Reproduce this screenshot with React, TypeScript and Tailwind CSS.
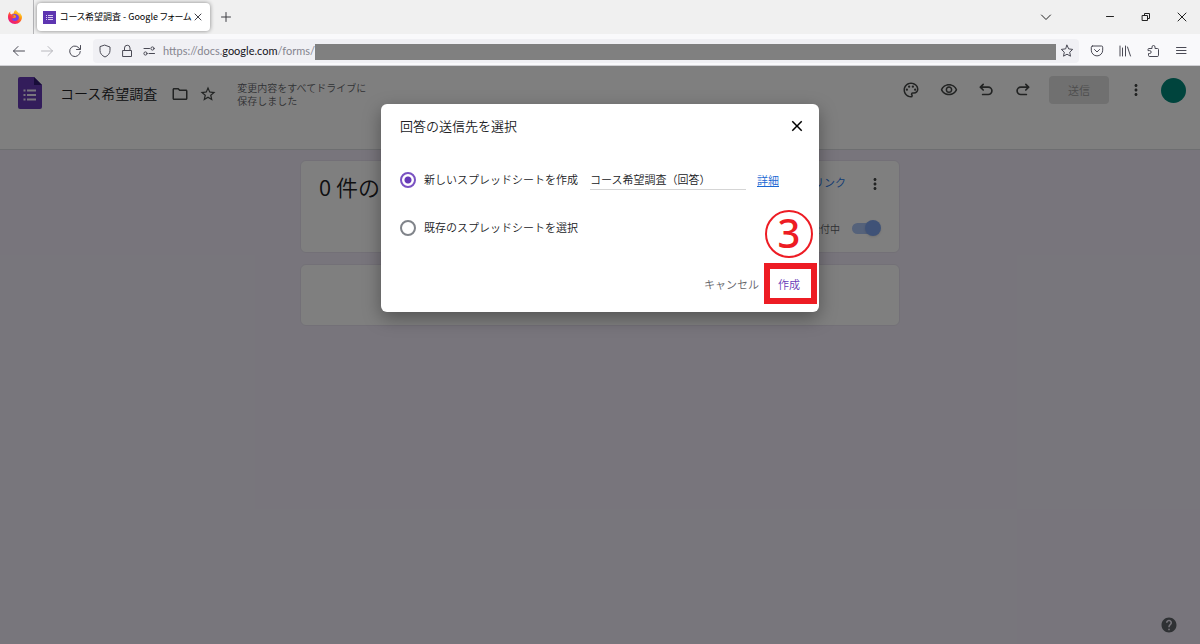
import type { ReactNode } from 'react';
import { MdClose, MdHelp, MdMoreVert, MdOutlineFolder, MdOutlinePalette, MdOutlineVisibility, MdStarBorder } from 'react-icons/md';

function Stroke({ children, className = 'size-4', width = 1 }: { children: ReactNode; className?: string; width?: number }) {
    return (
        <svg viewBox="0 0 16 16" className={`shrink-0 ${className}`} fill="none" stroke="currentColor" strokeWidth={width} strokeLinecap="round" strokeLinejoin="round" aria-hidden="true">
            {children}
        </svg>
    );
}

function FirefoxLogo() {
    return (
        <svg viewBox="0 0 32 32" className="size-[14px]" aria-hidden="true">
            <defs>
                <linearGradient id="flame" x1="0.85" y1="0.05" x2="0.2" y2="0.95">
                    <stop offset="0" stopColor="#fff44f" />
                    <stop offset="0.35" stopColor="#ff980e" />
                    <stop offset="0.65" stopColor="#ff3647" />
                    <stop offset="1" stopColor="#e31587" />
                </linearGradient>
            </defs>
            <path d="M30 11c-1-3-3-5-5-6 1 2 2 4 2 5C24 5 20 4 18 0c-4 2-5 6-5 8-2 0-4 1-5 2L5 8c0-2 0-3 1-5-5 3-6 9-6 13 0 9 7 16 16 16s16-7 16-16c0-2-1-4-2-5z" fill="url(#flame)" />
            <path d="M16 9c5 0 9 3 9 8s-4 8-9 8-8-3-8-7c2 2 4 2 6 1 2-1 3-1 4-2-1-2-3-2-5-2-2-1-4-3-2-5 2-1 4-1 5-1z" fill="#7542e5" />
            <path d="M13 11c2 0 4 1 5 3 1 1 0 3-2 3-2 1-4 1-6 0 2 0 3-1 4-2-2 0-3-2-1-4z" fill="#ff980e" />
        </svg>
    );
}

function TabStrip() {
    return (
        <div className="flex h-[34px] items-center bg-[#f0f0f0] text-[#3c3c43]">
            <div className="flex h-full w-[34px] items-center border-r border-[#b5b5b8] pl-2">
                <FirefoxLogo />
            </div>
            <div className="ml-[3px] flex h-7 w-[173px] items-center rounded-sm bg-white px-1.5 shadow-[0_0_4px_rgba(0,0,0,0.45)]">
                <svg viewBox="0 0 13 13" className="size-[13px] shrink-0" aria-hidden="true">
                    <path fill="#5e35b1" d="M0 0h13v13H0z" />
                    <path fill="#d9cdf0" d="M3 4h1v1H3zM5 4h5v1H5zM3 6h1v1H3zM5 6h5v1H5zM3 8h1v1H3zM5 8h5v1H5z" />
                </svg>
                <span className="ml-1 flex-1 whitespace-nowrap text-[9px] font-normal text-black [font-feature-settings:'palt']">コース希望調査 - Google フォーム</span>
                <button aria-label="タブを閉じる">
                    <Stroke className="size-3" width={1.3}><path d="M4 4l8 8M12 4l-8 8" /></Stroke>
                </button>
            </div>
            <button className="ml-2" aria-label="新しいタブ">
                <Stroke><path d="M8 3.5v9M3.5 8h9" /></Stroke>
            </button>
            <div className="ml-auto flex items-center pr-2.5 text-[#222]">
                <button className="mr-12" aria-label="タブを一覧表示">
                    <Stroke><path d="M3.5 6L8 10.5 12.5 6" /></Stroke>
                </button>
                <button className="mr-5" aria-label="最小化">
                    <Stroke><path d="M4.5 7.5h7" /></Stroke>
                </button>
                <button className="mr-5" aria-label="元のサイズに戻す">
                    <Stroke><path d="M4.5 6.5h5v5h-5zM6.5 6.5v-2h5v5h-2" /></Stroke>
                </button>
                <button aria-label="閉じる">
                    <Stroke><path d="M4 4l8 8M12 4l-8 8" /></Stroke>
                </button>
            </div>
        </div>
    );
}

function AddressBar() {
    return (
        <div className="flex h-8 items-center border-b border-[#d0d0d4] bg-[#f9f9fb] pr-[11px] pt-0.5 text-[#4a4a55]">
            <div className="flex w-[93px] items-center gap-3 pl-[11px]">
                <button aria-label="戻る">
                    <Stroke><path d="M13.5 8h-11M7 3.5L2.5 8 7 12.5" /></Stroke>
                </button>
                <button className="text-[#b8b8bd]" aria-label="進む" disabled>
                    <Stroke><path d="M2.5 8h11M9 3.5L13.5 8 9 12.5" /></Stroke>
                </button>
                <button aria-label="再読み込み">
                    <Stroke><path d="M13 6.5A5.3 5.3 0 1 0 13.3 8.5M13.5 2.5v4h-4" /></Stroke>
                </button>
            </div>
            <div className="flex h-6 min-w-0 flex-1 items-center rounded bg-[#f0f0f4] px-1">
                <Stroke><path d="M8 2.2l5 1.8v3.5c0 3-2 5.2-5 6.5-3-1.3-5-3.5-5-6.5V4z" /></Stroke>
                <Stroke className="ml-1.5 size-4"><path d="M4 7.5h8.500v6H4zM5.5 7.5V5a2.750 2.750 0 0 1 5.5 0v2.5" /></Stroke>
                <Stroke className="ml-1.5 size-4"><path d="M3 5.5h5.5M8 10.5h5.5" /><circle cx="11.5" cy="5.5" r="1.6" /><circle cx="4.5" cy="10.5" r="1.6" /></Stroke>
                <span className="ml-1.5 pt-0.5 font-['Lato'] text-[11px] font-normal text-[#85858f]">
                    https://docs.<span className="text-[#15141a]">google.com</span>/forms/
                </span>
                <span className="mt-0.5 h-4 flex-1 bg-[#808080]" />
                <button className="ml-[3px]" aria-label="ブックマークに追加">
                    <Stroke><path d="M8 2.2l1.7 3.7 4 .5-3 2.8.8 4L8 11.2l-3.5 2 .8-4-3-2.8 4-.5z" /></Stroke>
                </button>
            </div>
            <div className="ml-[10px] flex gap-3">
                <button aria-label="Pocket">
                    <Stroke><path d="M3.5 3h9A1.2 1.2 0 0 1 13.7 4.2v3a5.7 5.7 0 0 1-11.4 0v-3A1.2 1.2 0 0 1 3.5 3zM5.5 6.5L8 9l2.5-2.5" /></Stroke>
                </button>
                <button aria-label="ライブラリー">
                    <Stroke><path d="M3 3v10M5.5 5v8M8.5 3v10M10.5 4l3 9" /></Stroke>
                </button>
                <button aria-label="拡張機能">
                    <Stroke><path d="M4.5 13.5a1 1 0 0 1-1-1v-2h1.2a1.4 1.4 0 0 0 0-2.9H3V6.5a1 1 0 0 1 1-1h3V4a1.5 1.5 0 0 1 3 0v1.5h2.5a1 1 0 0 1 1 1v6a1 1 0 0 1-1 1z" /></Stroke>
                </button>
                <button aria-label="メニュー">
                    <Stroke><path d="M3.5 4.5h9.5M3.5 7.5h9.5M3.5 10.5h9.5" /></Stroke>
                </button>
            </div>
        </div>
    );
}

function FormsHeader() {
    return (
        <header className="flex h-[84px] items-start border-b border-[#dadce0] bg-white pl-[18px] pr-3.5 text-[#444746]">
            <svg viewBox="0 0 24 32" className="mt-[11px] h-8 w-6" aria-hidden="true">
                <path fill="#673ab7" d="M2 0h14l8 8v22a2 2 0 0 1-2 2H2a2 2 0 0 1-2-2V2a2 2 0 0 1 2-2z" />
                <path fill="#311b72" d="M16 0l8 8h-8z" />
                <path fill="#f1ebfa" d="M5.5 12.5h2v2h-2zM9 12.5h9v2H9zM5.5 17h2v2h-2zM9 17h9v2H9zM5.5 21.5h2v2h-2zM9 21.5h9v2H9z" />
            </svg>
            <h1 className="ml-[18px] mt-4 text-[14px] leading-[22px] text-[#202124]">コース希望調査</h1>
            <button className="ml-3.5 mt-[19px]" aria-label="フォルダに移動">
                <MdOutlineFolder className="size-[18px]" />
            </button>
            <button className="ml-2.5 mt-[19px]" aria-label="スターを付ける">
                <MdStarBorder className="size-[18px]" />
            </button>
            <p className="ml-5 mt-[15px] text-[10px] leading-[13px] text-[#5f6368]">
                変更内容をすべてドライブに
                <br />
                保存しました
            </p>
            <div className="ml-auto mt-2.5 flex h-7 items-center">
                <button aria-label="テーマをカスタマイズ"><MdOutlinePalette className="size-[18px]" /></button>
                <button className="ml-5" aria-label="プレビュー"><MdOutlineVisibility className="size-[18px]" /></button>
                <button className="ml-[19px]" aria-label="元に戻す">
                    <Stroke className="size-[18px]" width={1.5}><path d="M5.5 3L3 5.5 5.5 8M3 5.5h7a2.9 2.9 0 0 1 0 6.500H5" /></Stroke>
                </button>
                <button className="ml-[19px]" aria-label="やり直す">
                    <Stroke className="size-[18px]" width={1.5}><path d="M10.5 3L13 5.5 10.5 8M13 5.5H6A2.9 2.9 0 0 0 6 12h5" /></Stroke>
                </button>
                <button className="ml-[17px] h-7 w-[60px] rounded-sm bg-[#e0e0e0] text-[11px] text-[#9a9a9a]">送信</button>
                <button className="ml-[18px]" aria-label="その他"><MdMoreVert className="size-[18px]" /></button>
                <button className="ml-4 size-[25px] rounded-full bg-[#00897b]" aria-label="アカウント" />
            </div>
        </header>
    );
}

function Responses() {
    return (
        <main className="mx-auto mt-2.5 flex w-1/2 flex-col gap-[11px]">
            <section className="h-[93px] rounded-md border border-[#e6e1ee] bg-white pl-[18px] pr-[15px]">
                <div className="flex items-start pt-[7px]">
                    <h2 className="text-[22px] leading-9 text-[#202124]">0 件の</h2>
                    <a href="#sheets" className="ml-auto mt-1.5 text-[11px] leading-4 text-[#1a73e8]">リンク</a>
                    <button className="ml-5 mt-[7px] text-[#444746]" aria-label="その他のオプション"><MdMoreVert className="size-[18px]" /></button>
                </div>
                <label className="mt-4 flex items-center justify-end pr-[3px] text-[10px] text-[#5f6368]">
                    受付中
                    <span className="relative ml-3 flex h-4 w-[29px] items-center">
                        <input type="checkbox" defaultChecked className="absolute inset-0 appearance-none" />
                        <span className="h-[11px] w-7 rounded-full bg-[#aac4f5]" />
                        <span className="absolute right-0 size-4 rounded-full bg-[#7fa5ee] shadow" />
                    </span>
                </label>
            </section>
            <section className="h-[62px] rounded-md border border-[#e6e1ee] bg-white" />
        </main>
    );
}

const RADIO = 'size-4 shrink-0 appearance-none rounded-full border-2 border-[#80848a] checked:border-[#7a52c2] checked:bg-[radial-gradient(circle,#673ab7_3px,transparent_4px)]';

function DestinationDialog() {
    return (
        <div role="dialog" aria-labelledby="dialog-title" className="relative h-52 w-[438px] rounded-md bg-white pl-[19px] pr-0.5 shadow-[0_6px_18px_rgba(0,0,0,0.35)]">
            <div className="flex items-center justify-between pr-[11px] pt-3">
                <h2 id="dialog-title" className="text-[13px] leading-5 text-[#202124]">回答の送信先を選択</h2>
                <button aria-label="閉じる" className="text-black"><MdClose className="size-[18px]" /></button>
            </div>
            <div className="mt-8 flex h-6 items-center text-[11px] leading-4 text-[#202124]">
                <label className="flex items-center gap-2">
                    <input type="radio" name="destination" defaultChecked className={RADIO} />
                    <span className="pb-0.5">新しいスプレッドシートを作成</span>
                </label>
                <input aria-label="スプレッドシート名" defaultValue="コース希望調査（回答）" className="ml-3 h-5 w-[156px] border-b border-[#d5d5d5] pb-0.5" />
                <a href="#details" className="ml-[11px] text-[#1967d2] underline">詳細</a>
            </div>
            <div className="mt-6 flex h-6 items-center text-[11px] leading-4 text-[#202124]">
                <label className="flex items-center gap-2">
                    <input type="radio" name="destination" className={RADIO} />
                    <span className="pb-0.5">既存のスプレッドシートを選択</span>
                </label>
            </div>
            <div className="mt-[23px] flex items-center justify-end text-[11px]">
                <button className="pt-0.5 text-[#5f6368]">キャンセル</button>
                <button className="ml-[5px] h-[41px] w-[53px] border-[6px] border-[#ed1c24] pr-[3px] pt-0.5 text-[#673ab7]">作成</button>
            </div>
            {/* step marker */}
            <div className="absolute right-1.5 top-[106px] flex size-12 items-center justify-center rounded-full border-2 border-[#ed1c24] pb-0.5 font-['Noto_Sans'] text-[40px] font-medium leading-none text-[#ed1c24]">
                3
            </div>
        </div>
    );
}

export default function App() {
    return (
        <div className="flex min-h-screen flex-col font-['Noto_Sans_CJK_JP','Noto_Sans',sans-serif] font-[350]">
            <TabStrip />
            <AddressBar />
            <div className="relative flex-1 bg-[#f0ebf8]">
                <FormsHeader />
                <Responses />
                <button className="absolute bottom-2.5 right-[22px] text-[#5f6368]" aria-label="ヘルプ">
                    <MdHelp className="size-[18px]" />
                </button>
                <div className="absolute inset-0 flex items-start justify-center bg-black/50 pt-[38px]">
                    <DestinationDialog />
                </div>
            </div>
        </div>
    );
}
